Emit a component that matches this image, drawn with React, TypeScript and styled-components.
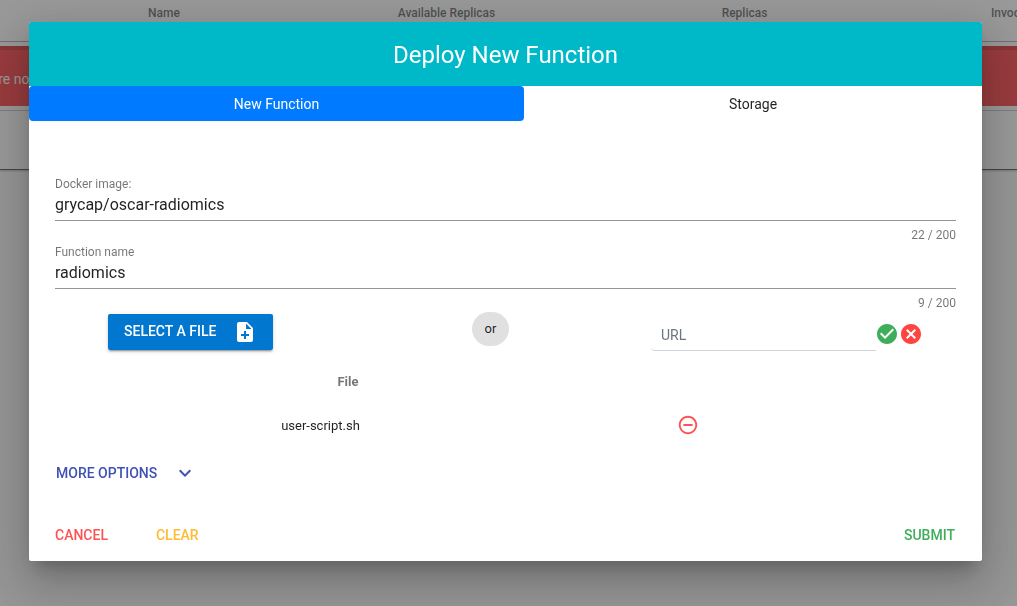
import React from "react";
import styled, { createGlobalStyle } from "styled-components";
import {
  MdCancel,
  MdCheckCircle,
  MdExpandMore,
  MdNoteAdd,
  MdRemoveCircleOutline,
} from "react-icons/md";

const GlobalStyle = createGlobalStyle`
  *, *::before, *::after { box-sizing: border-box; }
  html, body { margin: 0; overflow: hidden; }
  body { font-family: Roboto, "Liberation Sans", sans-serif; font-size: 14px; line-height: 1.5; color: rgba(0, 0, 0, 0.87); }
  button, input { font-family: inherit; }
`;

const Page = styled.div`
  height: 606px;
  overflow: hidden;
  background: #fafafa;
`;

const TableCard = styled.section`
  height: 170px;
  background: #fff;
  border-bottom: 1px solid #666;
  box-shadow: 0 1px 2px rgba(0, 0, 0, 0.25);
`;

const TableHead = styled.div`
  display: grid;
  grid-template-columns: 328px 237px 359px 196px;
  width: 1120px;
  height: 42px;
  border-bottom: 1px solid rgba(0, 0, 0, 0.3);
`;

const HeadCell = styled.div`
  padding-top: 4px;
  text-align: center;
  font-size: 12px;
  font-weight: 500;
  line-height: 18px;
  color: rgba(0, 0, 0, 0.54);
`;

const EmptyAlert = styled.div`
  height: 60px;
  margin-top: 4px;
  padding-top: 19px;
  border-top: 4px solid rgba(0, 0, 0, 0.12);
  background: #ff5459;
  color: #fff;
  line-height: 20px;
  white-space: nowrap;
`;

const AlertText = styled.span`
  display: block;
  margin-left: -217px;
  width: 246.5px;
  text-align: right;
`;

const TableFoot = styled.div`
  margin-top: 4px;
  border-top: 1px solid rgba(0, 0, 0, 0.2);
`;

const Backdrop = styled.div`
  position: fixed;
  inset: 0;
  padding: 22px 35px 45px 29px;
  background: rgba(33, 33, 33, 0.46);
`;

const Dialog = styled.div`
  display: flex;
  flex-direction: column;
  height: 539px;
  border-radius: 2px;
  overflow: hidden;
  background: #fff;
  box-shadow: 0 11px 15px -7px rgba(0, 0, 0, 0.2),
    0 24px 38px 3px rgba(0, 0, 0, 0.14), 0 9px 46px 8px rgba(0, 0, 0, 0.12);
`;

const Title = styled.h1`
  margin: 0;
  height: 64px;
  background: #00b9c8;
  color: #fff;
  text-align: center;
  font-size: 24px;
  font-weight: 400;
  line-height: 66px;
`;

const Tabs = styled.div`
  display: flex;
  height: 35px;
`;

const Tab = styled.button<{ $active?: boolean }>`
  flex: ${(p) => (p.$active ? "0 0 495px" : "1")};
  padding: 2px 0 0;
  border: 0;
  border-radius: 4px;
  background: ${(p) => (p.$active ? "#007bff" : "transparent")};
  color: ${(p) => (p.$active ? "#fff" : "rgba(0, 0, 0, 0.87)")};
  font-size: 14px;
  line-height: 33px;
`;

const Form = styled.form`
  display: flex;
  flex-direction: column;
  flex: 1;
  padding: 54px 26px 0;
`;

const Field = styled.label`
  display: block;
  height: 68px;
`;

const FieldLabel = styled.span`
  display: block;
  height: 18px;
  color: rgba(0, 0, 0, 0.54);
  font-size: 12px;
  line-height: 18px;
`;

const FieldInput = styled.input`
  display: block;
  width: 100%;
  height: 28px;
  padding: 0 0 5px;
  border: 0;
  border-bottom: 1px solid rgba(0, 0, 0, 0.42);
  outline: 0;
  background: transparent;
  color: rgba(0, 0, 0, 0.87);
  font-size: 16px;
`;

const Counter = styled.span`
  display: block;
  padding-top: 5px;
  text-align: right;
  color: rgba(0, 0, 0, 0.54);
  font-size: 12px;
  line-height: 18px;
`;

const SourceRow = styled.div`
  display: flex;
  align-items: flex-start;
  height: 61px;
  padding: 1px 33px 0 53px;
`;

const SelectButton = styled.button`
  display: flex;
  align-items: center;
  justify-content: space-between;
  width: 165px;
  height: 36px;
  margin-top: 2px;
  padding: 0 16px;
  border: 0;
  border-radius: 2px;
  background: #0277d0;
  color: #fff;
  font-size: 14px;
  font-weight: 500;
  box-shadow: 0 3px 1px -2px rgba(0, 0, 0, 0.2), 0 2px 2px rgba(0, 0, 0, 0.14),
    0 1px 5px rgba(0, 0, 0, 0.12);
`;

const SelectLabel = styled.span`
  padding-bottom: 2px;
`;

const OrChip = styled.span`
  width: 37px;
  height: 34px;
  margin-left: 199px;
  border-radius: 17px;
  background: #e0e0e0;
  text-align: center;
  font-size: 13px;
  line-height: 34px;
`;

const UrlGroup = styled.div`
  display: flex;
  align-items: flex-start;
  margin-left: auto;
`;

const UrlInput = styled.input`
  width: 225px;
  height: 32px;
  margin-top: 7px;
  padding: 0 10px;
  border: 0;
  border-bottom: 1px solid #ced4da;
  border-radius: 4px 0 0 4px;
  outline: 0;
  background: transparent;
  font-size: 14px;
  &::placeholder { color: #6c757d; opacity: 1; }
`;

const UrlIcons = styled.div`
  display: flex;
  margin: 10px 0 0 -1px;
`;

const FileTable = styled.div`
  display: grid;
  grid-template-columns: 586px 1fr;
  grid-template-rows: 21px 66px;
  font-size: 13px;
`;

const FileHead = styled.div`
  text-align: center;
  color: rgba(0, 0, 0, 0.54);
  font-weight: 700;
  line-height: 20px;
`;

const FileName = styled.div`
  padding-right: 55px;
  text-align: center;
  line-height: 66px;
`;

const FileAction = styled.div`
  display: flex;
  align-items: center;
  padding: 0 0 2px 36px;
`;

const MoreOptions = styled.button`
  display: flex;
  align-items: center;
  gap: 16px;
  align-self: flex-start;
  height: 28px;
  padding: 0 1px;
  border: 0;
  background: transparent;
  color: #3f51b5;
  font-size: 14px;
  font-weight: 500;
`;

const Actions = styled.footer`
  display: flex;
  gap: 48px;
  margin-top: 38px;
  padding-right: 1px;
`;

const ActionButton = styled.button<{ $color: string; $end?: boolean }>`
  margin-left: ${(p) => (p.$end ? "auto" : "0")};
  padding: 0;
  border: 0;
  background: transparent;
  color: ${(p) => p.$color};
  font-size: 14px;
  font-weight: 500;
  line-height: 20px;
`;

function TextField({ label, value, count }: { label: string; value: string; count: number }) {
  return (
    <Field>
      <FieldLabel>{label}</FieldLabel>
      <FieldInput defaultValue={value} maxLength={200} />
      <Counter>{count} / 200</Counter>
    </Field>
  );
}

export default function App() {
  return (
    <>
      <GlobalStyle />
      <Page>
        <TableCard>
          <TableHead>
            <HeadCell>Name</HeadCell>
            <HeadCell>Available Replicas</HeadCell>
            <HeadCell>Replicas</HeadCell>
            <HeadCell>Invocations</HeadCell>
          </TableHead>
          <EmptyAlert>
            <AlertText>Sorry, there are no</AlertText>
          </EmptyAlert>
          <TableFoot />
        </TableCard>
      </Page>
      <Backdrop>
        <Dialog role="dialog">
          <Title>Deploy New Function</Title>
          <Tabs>
            <Tab $active>New Function</Tab>
            <Tab>Storage</Tab>
          </Tabs>
          <Form onSubmit={(e) => e.preventDefault()}>
            <TextField label="Docker image:" value="grycap/oscar-radiomics" count={22} />
            <TextField label="Function name" value="radiomics" count={9} />
            <SourceRow>
              <SelectButton type="button">
                <SelectLabel>SELECT A FILE</SelectLabel>
                <MdNoteAdd size={24} />
              </SelectButton>
              <OrChip>or</OrChip>
              <UrlGroup>
                <UrlInput placeholder="URL" />
                <UrlIcons>
                  <MdCheckCircle size={24} color="#3fae5a" />
                  <MdCancel size={24} color="#ff4540" />
                </UrlIcons>
              </UrlGroup>
            </SourceRow>
            <FileTable>
              <FileHead>File</FileHead>
              <span />
              <FileName>user-script.sh</FileName>
              <FileAction>
                <MdRemoveCircleOutline size={22} color="#ff5252" />
              </FileAction>
            </FileTable>
            <MoreOptions type="button">
              MORE OPTIONS
              <MdExpandMore size={24} />
            </MoreOptions>
            <Actions>
              <ActionButton type="button" $color="#ff5252">CANCEL</ActionButton>
              <ActionButton type="button" $color="#ffbb33">CLEAR</ActionButton>
              <ActionButton type="submit" $color="#3fae5a" $end>SUBMIT</ActionButton>
            </Actions>
          </Form>
        </Dialog>
      </Backdrop>
    </>
  );
}
